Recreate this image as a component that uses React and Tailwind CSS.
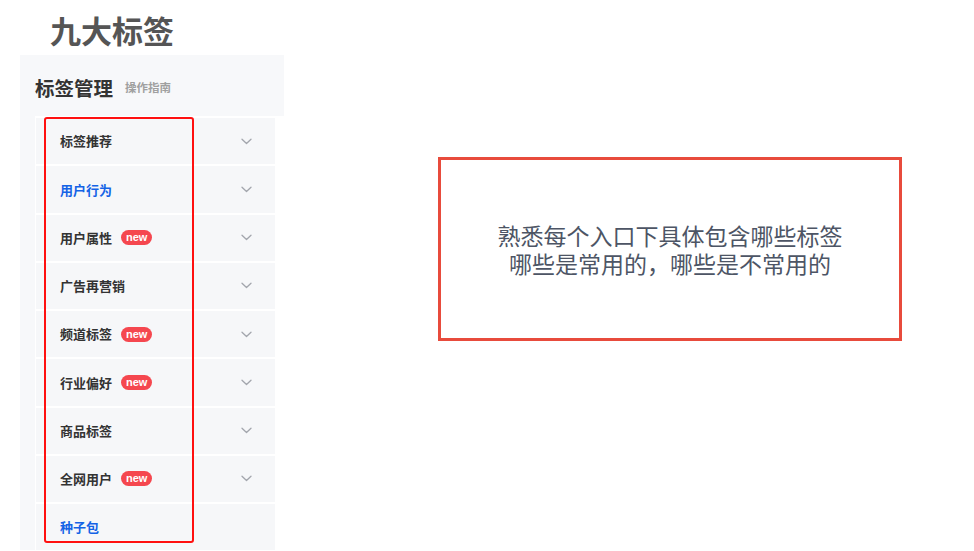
import React from 'react';

const items = [
  { label: '标签推荐', arrow: true },
  { label: '用户行为', arrow: true, active: true },
  { label: '用户属性', arrow: true, isNew: true },
  { label: '广告再营销', arrow: true },
  { label: '频道标签', arrow: true, isNew: true },
  { label: '行业偏好', arrow: true, isNew: true },
  { label: '商品标签', arrow: true },
  { label: '全网用户', arrow: true, isNew: true },
  { label: '种子包', active: true },
];

function Chevron() {
  return (
    <svg width="11" height="7" viewBox="0 0 11 7" fill="none">
      <path d="M1 1.2 L5.5 5.5 L10 1.2" stroke="#a3a6ad" strokeWidth="1.3" strokeLinecap="round" strokeLinejoin="round" />
    </svg>
  );
}

function MenuItem({ label, arrow, active, isNew }) {
  return (
    <div className="h-[46.25px] bg-[#f6f7f9] flex items-center justify-between pl-6 pr-[23px]">
      <div className="flex items-center gap-[9px]">
        <span className={`text-[13px] font-semibold ${active ? 'text-[#1463e6]' : 'text-[#333]'}`}>{label}</span>
        {isNew && (
          <span className="h-[15px] px-[5px] rounded-full bg-[#f5474f] text-white text-[11px] font-bold leading-[15px] font-['Liberation_Sans',sans-serif]">
            new
          </span>
        )}
      </div>
      {arrow && <Chevron />}
    </div>
  );
}

export default function App() {
  return (
    <div className="relative w-[974px] h-[551px] bg-white overflow-hidden font-['Noto_Sans_CJK_SC','Noto_Sans',sans-serif]">
      {/* Title */}
      <div className="h-[55px] pl-[50px] pt-[10px]">
        <h1 className="text-[31px] leading-[40px] font-bold text-[#555]">九大标签</h1>
      </div>

      <div className="flex">
        {/* Sidebar */}
        <div className="ml-[20px] w-[264px] shrink-0">
          <div className="h-[61px] bg-[#f7f8fa] flex items-center gap-[12px] pl-[15px] pt-[5px]">
            <span className="text-[19.5px] font-semibold text-[#333]">标签管理</span>
            <span className="text-[11.5px] font-semibold text-[#a0a0a0]">操作指南</span>
          </div>
          <div className="flex">
            <div className="w-[15px] bg-[#f7f8fa]" />
            <div className="w-[240px] border-l border-t-2 border-white flex flex-col gap-[2px]">
              {items.map((it) => (
                <MenuItem key={it.label} {...it} />
              ))}
            </div>
          </div>
        </div>

        {/* Note box */}
        <div className="ml-[154px] mt-[102px] w-[464px] h-[184px] border-[3px] border-[#e84b3c] flex flex-col items-center justify-center gap-[2px] text-[23px] leading-[26px] text-[#4d5565]">
          <p>熟悉每个入口下具体包含哪些标签</p>
          <p>哪些是常用的，哪些是不常用的</p>
        </div>
      </div>

      {/* Annotation outline */}
      <div className="absolute left-[44px] top-[117px] w-[150px] h-[426px] border-2 border-[#ff1010] rounded-[3px] pointer-events-none" />
    </div>
  );
}
